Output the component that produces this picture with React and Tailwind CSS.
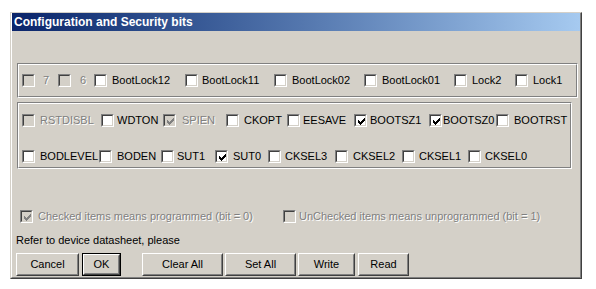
import React from "react";

const CHECK = [
  "......x",
  ".....xx",
  "x...xxx",
  "xx.xxx.",
  "xxxxx..",
  ".xxx...",
  "..x....",
];

function Check({ color }) {
  const rects = [];
  CHECK.forEach((row, y) =>
    row.split("").forEach((c, x) => {
      if (c === "x") rects.push(<rect key={x + "-" + y} x={x} y={y} width="1" height="1" fill={color} />);
    })
  );
  return (
    <svg width="7" height="7" viewBox="0 0 7 7" shapeRendering="crispEdges" className="absolute left-[2px] top-[2px]">
      {rects}
    </svg>
  );
}

function Box({ checked, disabled }) {
  return (
    <span className="relative block w-[13px] h-[13px] shrink-0 border border-t-[#808080] border-l-[#808080] border-r-white border-b-white">
      <span
        className={
          disabled
            ? "relative block w-[11px] h-[11px] border border-t-[#404040] border-l-[#404040] border-r-[#d4d0c8] border-b-[#d4d0c8] bg-[#d4d0c8]"
            : "relative block w-[11px] h-[11px] border border-t-[#404040] border-l-[#404040] border-r-[#d4d0c8] border-b-[#d4d0c8] bg-white"
        }
      >
        {checked && <Check color={disabled ? "#808080" : "#000000"} />}
      </span>
    </span>
  );
}

function Item({ label, w, ml, checked, disabled }) {
  return (
    <div className={"flex items-center shrink-0 " + w}>
      <Box checked={checked} disabled={disabled} />
      <span
        className={
          disabled
            ? ml + " whitespace-nowrap leading-[13px] text-[#808080] [text-shadow:1px_1px_0_#ffffff]"
            : ml + " whitespace-nowrap leading-[13px] text-black"
        }
      >
        {label}
      </span>
    </div>
  );
}

function Group({ className, children }) {
  return (
    <div className={"border border-t-[#808080] border-l-[#808080] border-r-white border-b-white " + className}>
      <div className="w-full h-full border border-t-white border-l-white border-r-[#808080] border-b-[#808080]">
        {children}
      </div>
    </div>
  );
}

function Btn({ label, w, ml, def }) {
  const inner = (
    <div className="h-full w-full border border-t-white border-l-white border-r-[#404040] border-b-[#404040]">
      <div className="h-full w-full border border-t-[#d4d0c8] border-l-[#d4d0c8] border-r-[#808080] border-b-[#808080] flex items-center justify-center text-black">
        {label}
      </div>
    </div>
  );
  if (def) {
    return <div className={"h-[23px] shrink-0 border border-black " + w + " " + ml}>{inner}</div>;
  }
  return <div className={"h-[23px] shrink-0 " + w + " " + ml}>{inner}</div>;
}

export default function App() {
  return (
    <div className="w-[596px] h-[289px] bg-white pt-[12px] pl-[10px] [font-family:'Liberation_Sans',Arial,sans-serif] text-[11px]">
      <div className="w-[572px] h-[267px] border border-t-[#d4d0c8] border-l-[#d4d0c8] border-r-[#404040] border-b-[#404040] bg-[#d4d0c8]">
        <div className="w-full h-full border-l border-l-white border-r border-r-[#808080] border-b border-b-[#808080] flex flex-col">
          <div className="h-[18px] bg-gradient-to-r from-[#0a246a] to-[#a6caf0] flex items-center pl-[2px]">
            <span className="text-white font-bold text-[12px] leading-[14px] whitespace-nowrap">
              Configuration and Security bits
            </span>
          </div>

          <Group className="mt-[32px] ml-[5px] w-[561px] h-[35px]">
            <div className="h-full flex items-center pl-[3px]">
              <Item label="7" w="w-[36px]" ml="ml-[8px]" disabled />
              <Item label="6" w="w-[36px]" ml="ml-[9px]" disabled />
              <Item label="BootLock12" w="w-[91px]" ml="ml-[5px]" />
              <Item label="BootLock11" w="w-[89px]" ml="ml-[4px]" />
              <Item label="BootLock02" w="w-[90px]" ml="ml-[5px]" />
              <Item label="BootLock01" w="w-[90px]" ml="ml-[5px]" />
              <Item label="Lock2" w="w-[61px]" ml="ml-[5px]" />
              <Item label="Lock1" w="w-[40px]" ml="ml-[5px]" />
            </div>
          </Group>

          <Group className="mt-[4px] ml-[5px] w-[555px] h-[67px]">
            <div className="flex flex-col pl-[3px] pt-[10px] gap-[23px]">
              <div className="flex items-center">
                <Item label="RSTDISBL" w="w-[79px]" ml="ml-[5px]" disabled />
                <Item label="WDTON" w="w-[62px]" ml="ml-[3px]" />
                <Item label="SPIEN" w="w-[63px]" ml="ml-[6px]" checked disabled />
                <Item label="CKOPT" w="w-[61px]" ml="ml-[5px]" />
                <Item label="EESAVE" w="w-[67px]" ml="ml-[3px]" />
                <Item label="BOOTSZ1" w="w-[75px]" ml="ml-[3px]" checked />
                <Item label="BOOTSZ0" w="w-[67px]" ml="ml-[1px]" checked />
                <Item label="BOOTRST" w="w-[60px]" ml="ml-[5px]" />
              </div>
              <div className="flex items-center">
                <Item label="BODLEVEL" w="w-[77px]" ml="ml-[5px]" />
                <Item label="BODEN" w="w-[62px]" ml="ml-[5px]" />
                <Item label="SUT1" w="w-[54px]" ml="ml-[3px]" />
                <Item label="SUT0" w="w-[53px]" ml="ml-[5px]" checked />
                <Item label="CKSEL3" w="w-[67px]" ml="ml-[4px]" />
                <Item label="CKSEL2" w="w-[67px]" ml="ml-[5px]" />
                <Item label="CKSEL1" w="w-[66px]" ml="ml-[4px]" />
                <Item label="CKSEL0" w="w-[60px]" ml="ml-[4px]" />
              </div>
            </div>
          </Group>

          <div className="mt-[41px] flex items-center pl-[8px]">
            <Item label="Checked items means programmed (bit = 0)" w="w-[263px]" ml="ml-[5px]" checked disabled />
            <Item label="UnChecked items means unprogrammed (bit = 1)" w="w-[260px]" ml="ml-[3px]" disabled />
          </div>

          <div className="mt-[11px] pl-[4px] leading-[13px] text-black">Refer to device datasheet, please</div>

          <div className="mt-[6px] flex">
            <Btn label="Cancel" w="w-[63px]" ml="ml-[4px]" />
            <Btn label="OK" w="w-[39px]" ml="ml-[3px]" def />
            <Btn label="Clear All" w="w-[81px]" ml="ml-[21px]" />
            <Btn label="Set All" w="w-[71px]" ml="ml-[2px]" />
            <Btn label="Write" w="w-[57px]" ml="ml-[2px]" />
            <Btn label="Read" w="w-[51px]" ml="ml-[3px]" />
          </div>
        </div>
      </div>
    </div>
  );
}
